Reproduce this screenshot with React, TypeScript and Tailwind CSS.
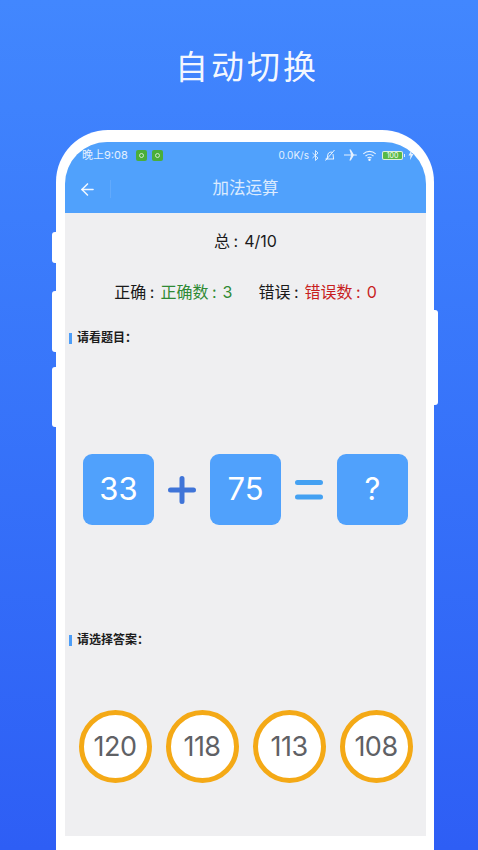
import React from 'react'
import { ArrowLeft } from 'lucide-react'

const answers = ['120', '118', '113', '108']

function NumberBox({ value }: { value: string }) {
  return (
    <div className="flex h-[71px] w-[71px] items-center justify-center rounded-[9px] bg-[#50a1fc] text-[31px] font-normal text-white">
      {value}
    </div>
  )
}

function SectionLabel({ text }: { text: string }) {
  return (
    <div className="flex h-[14px] items-center pl-[4px]">
      <div className="h-[11px] w-[3px] bg-[#4c9df8]"></div>
      <span className="ml-[5px] text-[12px] font-bold leading-none text-[#1c1c1c]">{text}</span>
    </div>
  )
}

function Colon() {
  return <span className="ml-[3.500px] mr-[6px]">:</span>
}

function StatusBar() {
  return (
    <div className="flex h-[26px] items-center justify-between pl-[17px] pr-[12px] text-white/85">
      <div className="flex items-center">
        <span className="text-[11px] leading-none">晚上9:08</span>
        <div className="ml-[8px] flex h-[11px] w-[11px] items-center justify-center rounded-[2px] bg-[#4aae3a]">
          <div className="h-[5px] w-[5px] rounded-full border border-white/70"></div>
        </div>
        <div className="ml-[5px] flex h-[11px] w-[11px] items-center justify-center rounded-[2px] bg-[#4aae3a]">
          <div className="h-[5px] w-[5px] rounded-full border border-white/70"></div>
        </div>
      </div>
      <div className="flex items-center">
        <span className="text-[10px] leading-none">0.0K/s</span>
        {/* bluetooth */}
        <svg className="ml-[3px] h-[11px] w-[7px]" viewBox="0 0 7 11" fill="none" stroke="currentColor" strokeWidth="0.9">
          <path d="M0.5 3l5.5 5-2.500 2.500v-10l2.500 2.500-5.500 5" />
        </svg>
        {/* alarm off */}
        <svg className="ml-[5px] h-[12px] w-[12px]" viewBox="0 0 12 12" fill="none" stroke="currentColor" strokeWidth="1">
          <path d="M1.500 10h8.500M3 10l1-5c.4-1.600 3-2.600 4.600-1.400M9 5l.6 5M1.500 11.500L10.500 1" />
        </svg>
        {/* airplane */}
        <svg className="ml-[8px] h-[12px] w-[13px]" viewBox="0 0 13 12" fill="currentColor">
          <path d="M0 6.600h7l-1.600 5h1.400l3-5h2.200c.5 0 1-.3 1-.6s-.5-.6-1-.6H9.800l-3-5H5.400l1.600 5H0z" />
        </svg>
        {/* wifi */}
        <svg className="ml-[5px] h-[11px] w-[15px]" viewBox="0 0 14 11" fill="none" stroke="currentColor" strokeWidth="1.100">
          <path d="M.8 3.800c3.500-3.200 8.900-3.200 12.400 0M3 6c2.300-2 5.700-2 8 0M5 8c1.200-.9 2.800-.9 4 0" />
          <circle cx="7" cy="9.800" r=".7" fill="currentColor" />
        </svg>
        {/* battery */}
        <div className="ml-[5px] flex h-[9px] w-[21px] items-center justify-center rounded-[2px] border border-white/80 bg-[#58b947] text-[7px] leading-none text-white">
          100
        </div>
        <div className="ml-[1px] h-[3px] w-[1px] bg-white/80"></div>
        {/* charging */}
        <svg className="ml-[3px] h-[10px] w-[6px]" viewBox="0 0 6 10" fill="currentColor">
          <path d="M3.500 0L.5 5.600h2L2 10l3.500-6h-2z" />
        </svg>
      </div>
    </div>
  )
}

export default function App() {
  return (
    <div
      className="flex h-[850px] w-[478px] flex-col overflow-hidden bg-gradient-to-b from-[#4287fe] to-[#2e5ef5]"
      style={{ fontFamily: 'Inter, "Noto Sans CJK SC", sans-serif' }}
    >
      <h1 className="flex h-[130px] shrink-0 items-center justify-center pl-[16px] pt-[5px] text-[33px] font-normal tracking-[3px] text-white/95">
        自动切换
      </h1>

      <div className="relative ml-[56px] mr-[44px] flex-1">
        {/* side buttons */}
        <div className="absolute left-[-4px] top-[102px] h-[31px] w-[4px] rounded-l-[3px] bg-white"></div>
        <div className="absolute left-[-4px] top-[161px] h-[61px] w-[4px] rounded-l-[3px] bg-white"></div>
        <div className="absolute left-[-4px] top-[237px] h-[60px] w-[4px] rounded-l-[3px] bg-white"></div>
        <div className="absolute right-[-4px] top-[180px] h-[95px] w-[4px] rounded-r-[3px] bg-white"></div>

        <div className="h-full rounded-t-[52px] bg-white pb-[14px] pl-[9px] pr-[8px] pt-[12px]">
          <div className="flex h-full flex-col overflow-hidden rounded-t-[42px] bg-[#efeff1]">
            <div className="h-[71px] shrink-0 bg-[#50a1fc]">
              <StatusBar />
              <div className="relative flex h-[45px] items-center justify-center pb-[5px]">
                <ArrowLeft className="absolute left-[13px] top-[12px] h-[19px] w-[19px] text-white/90" strokeWidth={2} />
                <div className="absolute left-[45px] top-[12px] h-[18px] w-px bg-white/10"></div>
                <span className="text-[16.500px] leading-none text-white/80">加法运算</span>
              </div>
            </div>

            <div className="flex h-[56px] items-center justify-center text-[16px] text-[#1a1a1a]">
              总<Colon />4/10
            </div>

            <div className="flex h-[46px] items-center justify-center gap-[26px] text-[16px] text-[#1a1a1a]">
              <span className="flex">
                正确<Colon />
                <span className="flex text-[#2f8a35]">
                  正确数<Colon />3
                </span>
              </span>
              <span className="flex">
                错误<Colon />
                <span className="flex text-[#c81e1e]">
                  错误数<Colon />0
                </span>
              </span>
            </div>

            <div className="mt-[16px]">
              <SectionLabel text="请看题目：" />
            </div>

            <div className="mt-[109px] flex items-center justify-center gap-[14px]">
              <NumberBox value="33" />
              <span className="flex w-[28px] items-center justify-center">
                <svg className="h-[28px] w-[28px]" viewBox="0 0 28 28" fill="none" stroke="#3f74d8" strokeWidth="5" strokeLinecap="round">
                  <path d="M2.500 14h23M14 2.500v23" />
                </svg>
              </span>
              <NumberBox value="75" />
              <span className="flex w-[28px] items-center justify-center">
                <svg className="h-[22px] w-[28px]" viewBox="0 0 28 22" fill="none" stroke="#44a1f2" strokeWidth="5" strokeLinecap="round">
                  <path d="M2.500 3.500h23M2.500 18h23" />
                </svg>
              </span>
              <NumberBox value="?" />
            </div>

            <div className="mt-[108px]">
              <SectionLabel text="请选择答案：" />
            </div>

            <div className="mt-[63px] flex justify-center gap-[14px]">
              {answers.map((a) => (
                <div
                  key={a}
                  className="flex h-[73px] w-[73px] items-center justify-center rounded-full border-[5px] border-[#f4a916] bg-white pt-[2px] text-[27px] font-normal tracking-[-0.500px] text-[#5f6165]"
                >
                  {a}
                </div>
              ))}
            </div>
          </div>
        </div>
      </div>
    </div>
  )
}
